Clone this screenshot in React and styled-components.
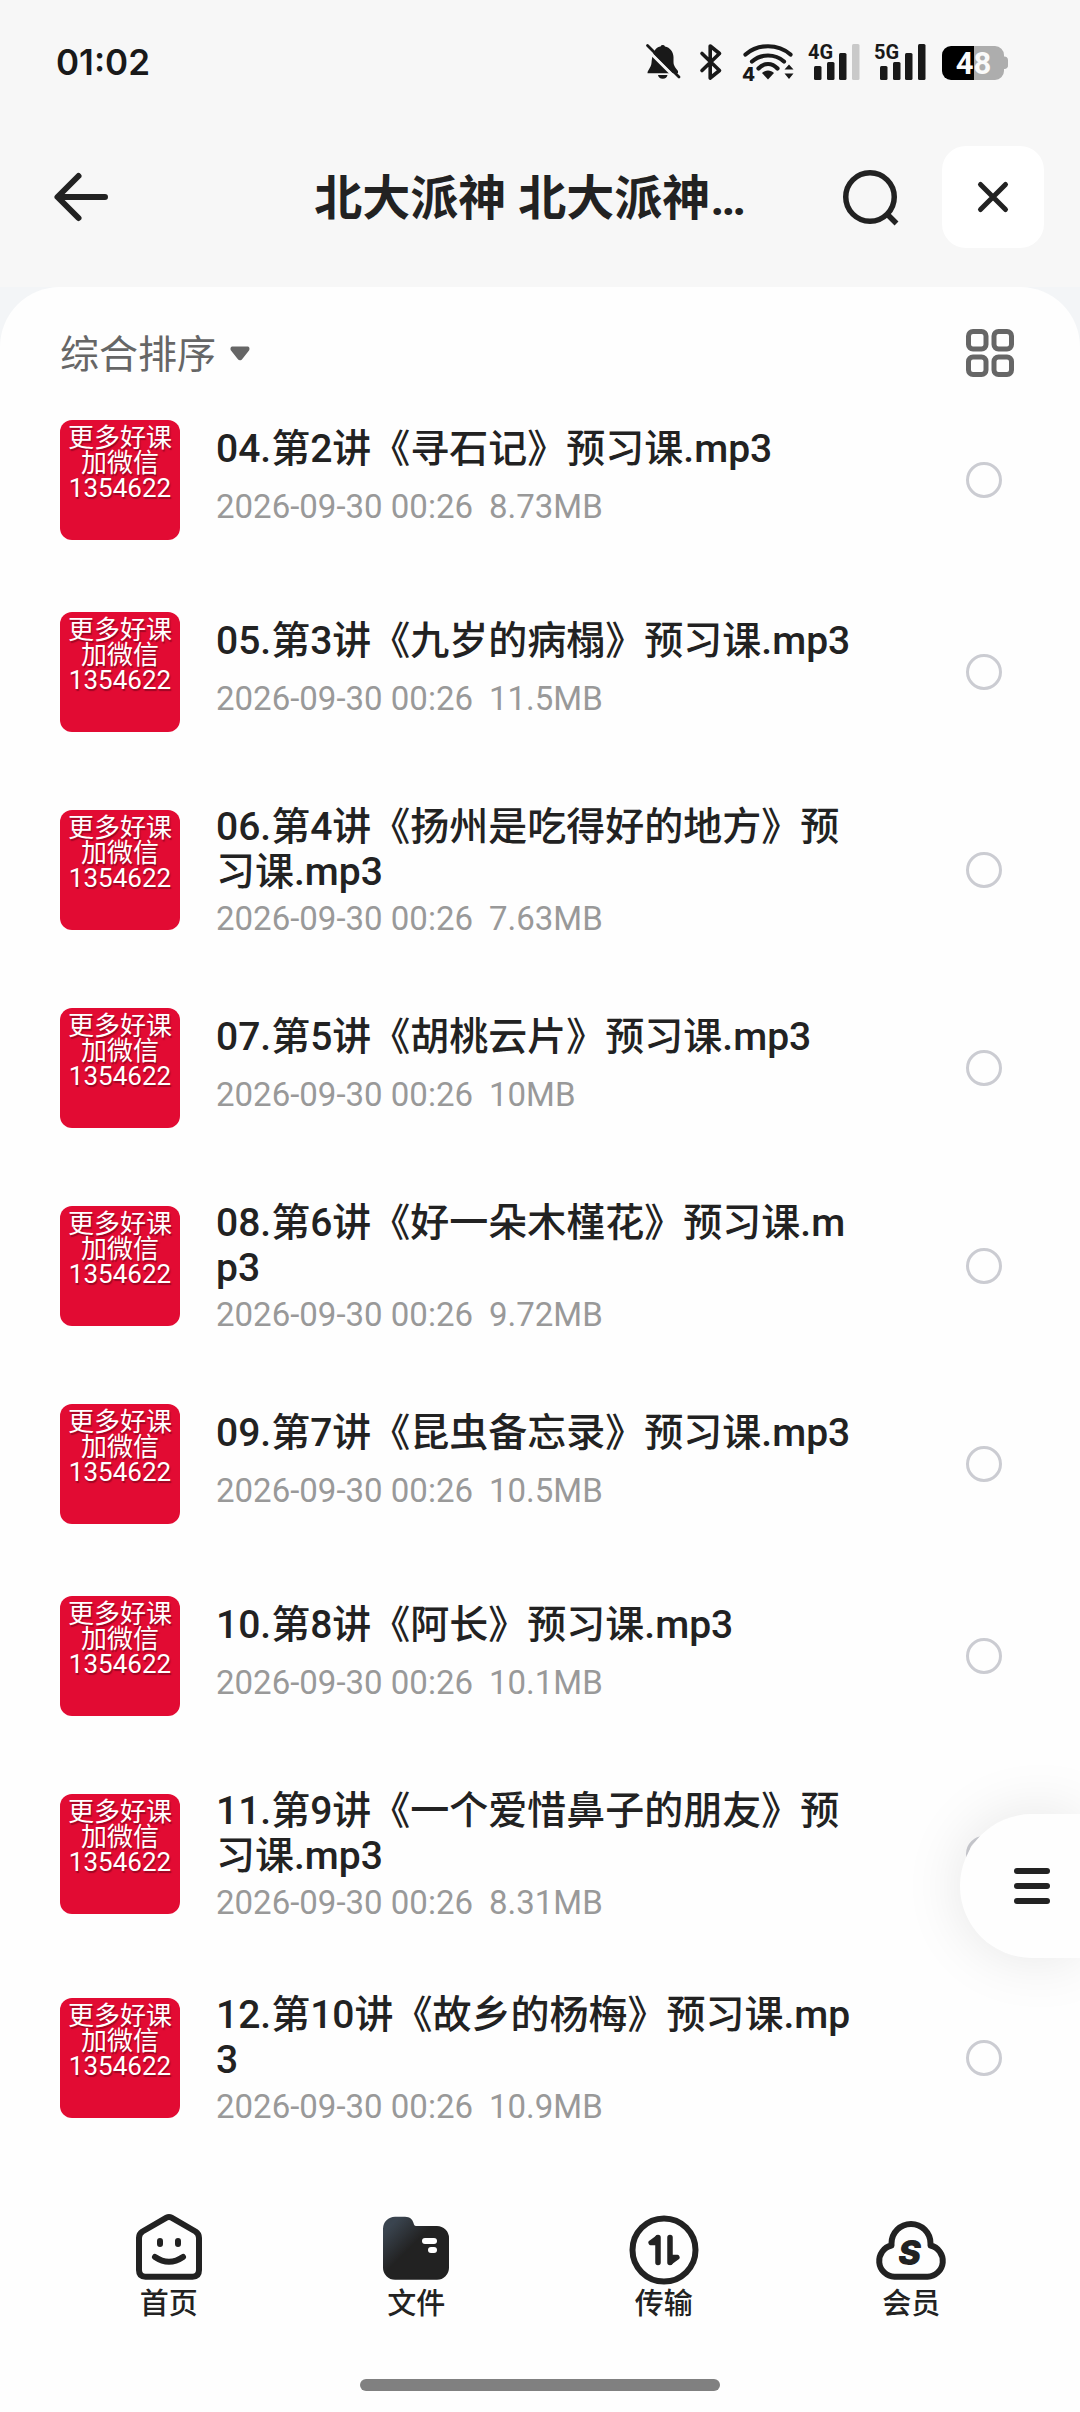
import { useState } from "react";
import styled, { createGlobalStyle } from "styled-components";

const files = [
  { id: 4, name: "04.第2讲《寻石记》预习课.mp3", date: "2026-09-30 00:26", size: "8.73MB" },
  { id: 5, name: "05.第3讲《九岁的病榻》预习课.mp3", date: "2026-09-30 00:26", size: "11.5MB" },
  { id: 6, name: "06.第4讲《扬州是吃得好的地方》预习课.mp3", date: "2026-09-30 00:26", size: "7.63MB" },
  { id: 7, name: "07.第5讲《胡桃云片》预习课.mp3", date: "2026-09-30 00:26", size: "10MB" },
  { id: 8, name: "08.第6讲《好一朵木槿花》预习课.mp3", date: "2026-09-30 00:26", size: "9.72MB" },
  { id: 9, name: "09.第7讲《昆虫备忘录》预习课.mp3", date: "2026-09-30 00:26", size: "10.5MB" },
  { id: 10, name: "10.第8讲《阿长》预习课.mp3", date: "2026-09-30 00:26", size: "10.1MB" },
  { id: 11, name: "11.第9讲《一个爱惜鼻子的朋友》预习课.mp3", date: "2026-09-30 00:26", size: "8.31MB" },
  { id: 12, name: "12.第10讲《故乡的杨梅》预习课.mp3", date: "2026-09-30 00:26", size: "10.9MB" },
];

/* Status bar icons */
const BellOffIcon = () => (
  <svg width="38" height="40" viewBox="0 0 38 40" fill="#191919">
    <path d="M8 13C9 8 12 5 15.500 4.500A2.500 2.500 0 0 1 20 4.500C25 5.500 28.500 10 28.500 15V20C28.500 24 31 26 33 29V31.300H2.500C2.500 28 6 26 6.500 21C6.800 18 7 15 8 13Z" />
    <path d="M13 33H22.500A4.800 4.300 0 0 1 13 33Z" />
    <path d="M-1 4.500L30 35.500" stroke="#f7f7f7" strokeWidth="3" />
    <path d="M2.500 3.500L34 35" stroke="#191919" strokeWidth="2.800" strokeLinecap="round" />
  </svg>
);

const BluetoothIcon = () => (
  <svg width="28" height="40" viewBox="0 0 28 40" fill="none">
    <path d="M5 11.500L22.500 28.500L13.200 36V4L22.500 11.500L5 28.500" stroke="#191919" strokeWidth="3.600" strokeLinecap="round" strokeLinejoin="round" />
  </svg>
);

const WifiIcon = () => (
  <svg width="55" height="40" viewBox="0 0 55 40" fill="none">
    <g stroke="#191919" strokeWidth="4.200" strokeLinecap="round">
      <path d="M6.500 12.500C19 1.500 39 1.500 51.500 12.500" />
      <path d="M13 19.500C22 11.500 36 11.500 45 19.500" />
      <path d="M19.500 26.500C25 20.500 33 20.500 38.500 26.500" />
    </g>
    <path d="M23 31C26 27.500 32 27.500 35 31L29 37.500Z" fill="#191919" />
    <path d="M45.500 27.500L50 22.500L54.500 27.500ZM45.500 31.500H54.500L50 37Z" fill="#191919" />
    <text x="3" y="39" fontSize="19" fontWeight="800" fontFamily="Inter, sans-serif" fill="#191919">4</text>
  </svg>
);

const SignalIcon = ({ label, weak }) => (
  <svg width="52" height="40" viewBox="0 0 52 40" fill="#191919">
    <text x="0" y="17" fontSize="20" fontWeight="700" fontFamily="Roboto, sans-serif">{label}</text>
    <rect x="6" y="24" width="7.500" height="14" rx="1.500" />
    <rect x="19" y="20" width="7.500" height="18" rx="1.500" />
    <rect x="31" y="11" width="7.500" height="27" rx="1.500" />
    <rect x="44" y="2" width="7.500" height="36" rx="1.500" fill={weak ? "#c9c9c9" : "#191919"} />
  </svg>
);

const BatteryIcon = () => (
  <svg width="68" height="40" viewBox="0 0 68 40">
    <path d="M34 4H55A9 9 0 0 1 64 13V14.500A3.500 3.500 0 0 1 68 18V23A3.500 3.500 0 0 1 64 27V29A9 9 0 0 1 55 38H34Z" fill="#adadad" />
    <path d="M34 4H11A9 9 0 0 0 2 13V29A9 9 0 0 0 11 38H34Z" fill="#000" />
    <text x="33.500" y="32" textAnchor="middle" fontSize="31" fontWeight="700" fontFamily="Roboto, sans-serif" fill="#fafafa">48</text>
  </svg>
);

/* Header icons */
const BackIcon = () => (
  <svg width="54" height="48" viewBox="0 0 54 48" fill="none" stroke="#222" strokeWidth="6" strokeLinecap="round" strokeLinejoin="round">
    <path d="M24.500 3L3.500 24L24.500 45M4 24H51" />
  </svg>
);

const SearchIcon = () => (
  <svg width="60" height="60" viewBox="0 0 60 60" fill="none" stroke="#222" strokeWidth="5.500">
    <circle cx="30" cy="30" r="24.250" />
    <path d="M47 47L56.500 56.500" />
  </svg>
);

const CloseIcon = () => (
  <svg width="30" height="30" viewBox="0 0 30 30" stroke="#222" strokeWidth="5" strokeLinecap="round">
    <path d="M2.500 2.500L27.500 27.500M27.500 2.500L2.500 27.500" />
  </svg>
);

const CaretIcon = () => (
  <svg width="20" height="15" viewBox="0 0 20 15" fill="#666">
    <path d="M2.500 0.500H17.500C19.500 0.500 20 3 19 4.500L12.500 12.800C11 14.800 9 14.800 7.500 12.800L1 4.500C0 3 0.500 0.500 2.500 0.500Z" />
  </svg>
);

const GridIcon = () => (
  <svg width="48" height="48" viewBox="0 0 48 48" fill="none" stroke="#666" strokeWidth="5">
    <rect x="2.500" y="2.500" width="17.500" height="17.500" rx="4.500" />
    <rect x="28" y="2.500" width="17.500" height="17.500" rx="4.500" />
    <rect x="2.500" y="28" width="17.500" height="17.500" rx="4.500" />
    <rect x="28" y="28" width="17.500" height="17.500" rx="4.500" />
  </svg>
);

const MenuIcon = () => (
  <svg width="36" height="36" viewBox="0 0 36 36" fill="#222">
    <rect width="36" height="6" rx="3" />
    <rect y="15" width="36" height="6" rx="3" />
    <rect y="30" width="36" height="6" rx="3" />
  </svg>
);

/* Tab bar icons */
const HomeIcon = () => (
  <svg width="72" height="72" viewBox="0 0 72 72" fill="none" stroke="#222" strokeWidth="6" strokeLinecap="round" strokeLinejoin="round">
    <path d="M33.500 5.700Q36 4.300 38.500 5.700L62.500 19.500Q66 21.700 66 26V58Q66 64.700 59.500 64.700H12.500Q6 64.700 6 58V26Q6 21.700 9.500 19.500Z" />
    <path d="M27 29V32M45 29V32" />
    <path d="M22 45Q36 54.500 50 45" />
  </svg>
);

const FolderIcon = () => (
  <svg width="72" height="72" viewBox="0 0 72 72">
    <defs>
      <linearGradient id="folder" x1="8" y1="10" x2="40" y2="42" gradientUnits="userSpaceOnUse">
        <stop offset="0.1" stopColor="#3a444f" />
        <stop offset="0.75" stopColor="#222" />
      </linearGradient>
    </defs>
    <path d="M15 4.700H25C30 4.700 32.500 7.500 33.500 11C34 13 34.500 14 36 14H57A12 12 0 0 1 69 26V55.700A12 12 0 0 1 57 67.700H15A12 12 0 0 1 3 55.700V16.700A12 12 0 0 1 15 4.700Z" fill="url(#folder)" />
    <rect x="42" y="26" width="15" height="6" rx="3" fill="#fff" />
    <rect x="48" y="35" width="9" height="6" rx="3" fill="#fff" />
  </svg>
);

const TransferIcon = () => (
  <svg width="72" height="76" viewBox="0 0 72 76" fill="#222" stroke="#222" strokeLinejoin="round" strokeLinecap="round">
    <circle cx="36" cy="38" r="31.500" fill="none" strokeWidth="6" />
    <path d="M30 25.500V50.500M42 25.500V50.500" strokeWidth="5.500" />
    <path d="M29.500 25L22 30.500L22.500 31.500H29.500Z" strokeWidth="3.500" />
    <path d="M42.500 51L50 45.500L49.500 44.500H42.500Z" strokeWidth="3.500" />
  </svg>
);

const MemberIcon = () => (
  <svg width="74" height="72" viewBox="-1 0 74 72">
    <path d="M16.500 33.500V31.500A19.500 19.500 0 0 1 55.500 31.500V33.500A15.800 15.800 0 0 1 52.500 64.700H19.500A15.800 15.800 0 0 1 16.500 33.500Z" fill="none" stroke="#222" strokeWidth="6" strokeLinejoin="round" />
    <text x="34.500" y="53" textAnchor="middle" fontSize="34" fontWeight="900" fontStyle="italic" fontFamily="Inter, sans-serif" fill="#222">S</text>
  </svg>
);

const tabs = [
  { label: "首页", icon: <HomeIcon /> },
  { label: "文件", icon: <FolderIcon /> },
  { label: "传输", icon: <TransferIcon /> },
  { label: "会员", icon: <MemberIcon /> },
];

const FileItem = ({ file, checked, onToggle }) => (
  <li>
    <FileRow>
      <Thumb>
        更多好课
        <br />
        加微信
        <br />
        1354622
      </Thumb>
      <FileInfo>
        <FileName>{file.name}</FileName>
        <FileMeta>
          <span>{file.date}</span>
          <span>{file.size}</span>
        </FileMeta>
      </FileInfo>
      <SelectBox type="checkbox" checked={checked} onChange={onToggle} />
    </FileRow>
  </li>
);

const App = () => {
  const [selected, setSelected] = useState([]);

  const toggle = (id) => {
    setSelected((prev) => (prev.includes(id) ? prev.filter((i) => i !== id) : [...prev, id]));
  };

  return (
    <Page>
      <GlobalStyle />

      <StatusBar>
        <Clock>01:02</Clock>
        <StatusIcons>
          <BellOffIcon />
          <BluetoothIcon />
          <WifiIcon />
          <SignalIcon label="4G" weak />
          <SignalIcon label="5G" />
          <BatteryIcon />
        </StatusIcons>
      </StatusBar>

      <Header>
        <IconButton aria-label="返回">
          <BackIcon />
        </IconButton>
        <Title>北大派神 北大派神…</Title>
        <IconButton aria-label="搜索">
          <SearchIcon />
        </IconButton>
        <CloseButton aria-label="关闭">
          <CloseIcon />
        </CloseButton>
      </Header>

      <PanelWrap>
        <Panel>
          <Toolbar>
            <SortButton>
              <SortLabel>综合排序</SortLabel>
              <CaretIcon />
            </SortButton>
            <IconButton aria-label="网格视图">
              <GridIcon />
            </IconButton>
          </Toolbar>

          <FileList>
            {files.map((file) => (
              <FileItem
                key={file.id}
                file={file}
                checked={selected.includes(file.id)}
                onToggle={() => toggle(file.id)}
              />
            ))}
          </FileList>

          <TabBar>
            {tabs.map((tab) => (
              <Tab key={tab.label} href="#">
                <TabIcon>{tab.icon}</TabIcon>
                {tab.label}
              </Tab>
            ))}
          </TabBar>
          <HomeIndicator />
        </Panel>
      </PanelWrap>

      <FloatingMenu aria-label="菜单">
        <MenuIcon />
      </FloatingMenu>
    </Page>
  );
};

export default App;

/* Styles */
const GlobalStyle = createGlobalStyle`
  * {
    box-sizing: border-box;
  }

  body {
    margin: 0;
    background: #fefefe;
    color: #222;
    font-family: Roboto, "Noto Sans CJK SC", sans-serif;
  }

  button {
    font-family: inherit;
    color: inherit;
    border: none;
    padding: 0;
    background: none;
    cursor: pointer;
  }

  svg {
    display: block;
    flex-shrink: 0;
    overflow: visible;
  }
`;

const Page = styled.div`
  min-height: 100vh;
  display: flex;
  flex-direction: column;
  background: #f7f7f7;
`;

const StatusBar = styled.div`
  display: flex;
  align-items: center;
  justify-content: space-between;
  height: 124px;
  padding: 0 72px 0 56px;
`;

const Clock = styled.span`
  font-family: Inter, sans-serif;
  font-size: 35px;
  font-weight: 600;
  color: #191919;
`;

const StatusIcons = styled.div`
  display: flex;
  align-items: center;
  gap: 14px;
`;

const Header = styled.header`
  display: flex;
  align-items: center;
  padding: 22px 36px 39px 54px;
`;

const IconButton = styled.button`
  display: flex;
  align-items: center;
  justify-content: center;
`;

const Title = styled.h1`
  flex: 1;
  margin: 0;
  padding: 4px 0 0 112px;
  font-size: 48px;
  font-weight: 700;
  line-height: 60px;
  text-align: center;
  white-space: nowrap;
  overflow: hidden;
  text-overflow: ellipsis;
`;

const CloseButton = styled(IconButton)`
  width: 102px;
  height: 102px;
  margin-left: 42px;
  border-radius: 24px;
  background: #fff;
`;

const PanelWrap = styled.div`
  flex: 1;
  display: flex;
  background: #f3f5f7;
`;

const Panel = styled.main`
  flex: 1;
  min-width: 0;
  display: flex;
  flex-direction: column;
  border-radius: 60px 60px 0 0;
  background: #fefefe;
`;

const Toolbar = styled.div`
  display: flex;
  align-items: center;
  justify-content: space-between;
  height: 97px;
  padding: 35px 66px 0 60px;
`;

const SortButton = styled.button`
  && {
    color: #666;
  }
  display: flex;
  align-items: center;
  gap: 14px;
  font-size: 39px;
  line-height: 48px;
`;

const SortLabel = styled.span`
  padding-top: 3px;
`;

const FileList = styled.ul`
  list-style: none;
  margin: 0;
  padding: 0;
`;

const FileRow = styled.label`
  display: flex;
  align-items: center;
  padding: 36px 78px 36px 60px;
  cursor: pointer;
`;

const Thumb = styled.div`
  flex-shrink: 0;
  width: 120px;
  height: 120px;
  padding-top: 6px;
  border-radius: 12px;
  background: #e20b33;
  color: #fff;
  font-size: 26px;
  line-height: 25px;
  text-align: center;
  text-shadow: 1px 2px 1px rgba(90, 0, 20, 0.5);
`;

const FileInfo = styled.div`
  flex: 1;
  min-width: 0;
  min-height: 108px;
  margin: 0 108px 0 36px;
`;

const FileName = styled.div`
  min-height: 57px;
  padding-top: 1px;
  font-size: 39px;
  font-weight: 500;
  line-height: 45px;
  word-break: break-all;
`;

const FileMeta = styled.div`
  display: flex;
  gap: 16px;
  margin-top: 7px;
  font-size: 33px;
  line-height: 34px;
  color: #999;
`;

const SelectBox = styled.input`
  appearance: none;
  flex-shrink: 0;
  width: 36px;
  height: 36px;
  margin: 0;
  border: 3px solid #cbccd2;
  border-radius: 50%;

  &:checked {
    border-color: #222;
    background: #222;
  }
`;

const TabBar = styled.nav`
  display: flex;
  margin-top: auto;
  padding: 52px 45px 0;
`;

const Tab = styled.a`
  flex: 1;
  display: flex;
  flex-direction: column;
  align-items: center;
  color: #222;
  font-size: 29px;
  font-weight: 500;
  line-height: 40px;
  text-decoration: none;
`;

const TabIcon = styled.span`
  height: 72px;
`;

const HomeIndicator = styled.div`
  width: 360px;
  height: 12px;
  margin: 55px auto 21px;
  border-radius: 6px;
  background: #808080;
`;

const FloatingMenu = styled.button`
  && {
    background: #fefefe;
  }
  position: fixed;
  right: 0;
  bottom: 454px;
  display: flex;
  align-items: center;
  width: 120px;
  height: 144px;
  padding-left: 54px;
  border-radius: 72px 0 0 72px;
  box-shadow: 0 0 60px rgba(0, 0, 0, 0.1);
`;
